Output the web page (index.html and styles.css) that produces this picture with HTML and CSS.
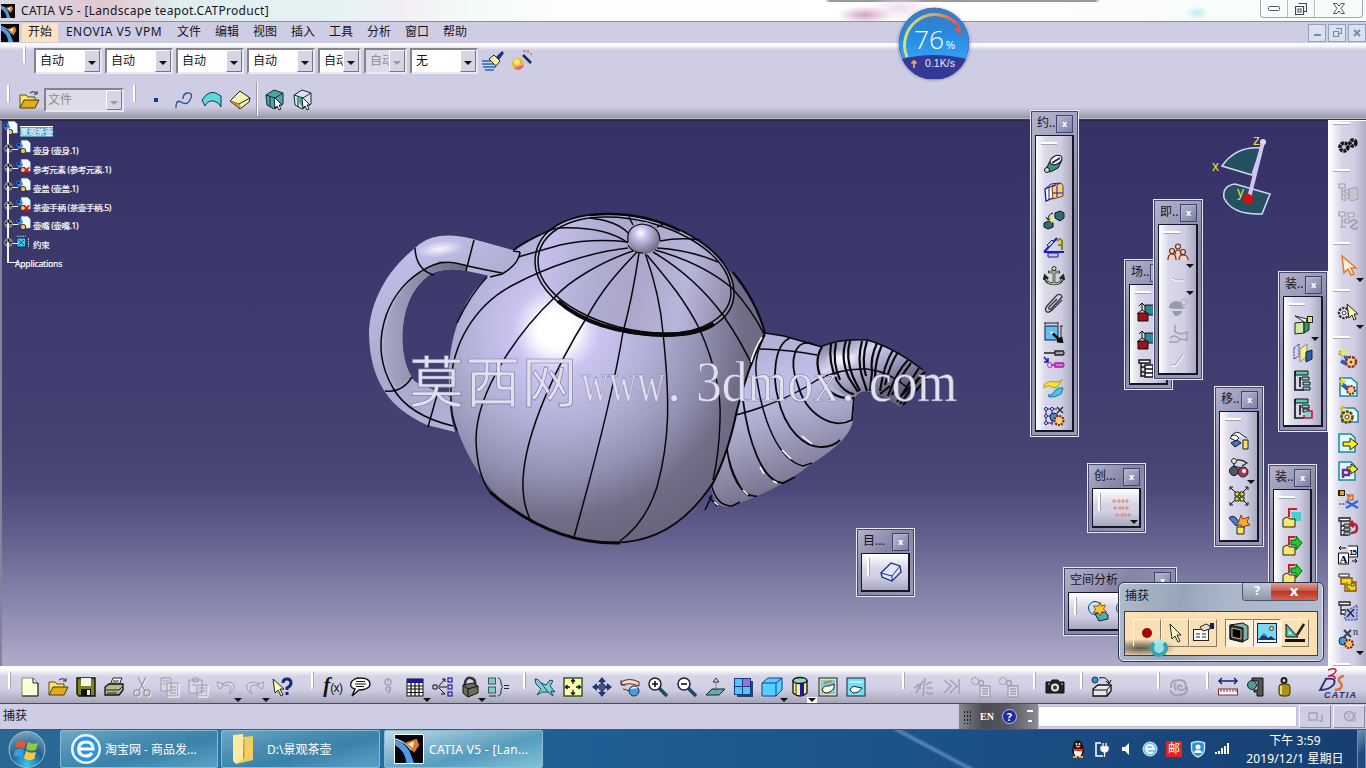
FILE: index.html
```html
<!DOCTYPE html>
<html lang="zh-CN">
<head>
  <meta charset="UTF-8" />
  <title>CATIA V5 - [Landscape teapot.CATProduct]</title>
  <link rel="stylesheet" href="styles.css">
</head>
<body>

  <!-- icon set -->
  <svg class="sprite" width="0" height="0">
    <symbol id="i-app" viewBox="0 0 22 22"><rect width="22" height="22" fill="#07070f"/><path d="M0 4Q6 5 11 12L15 22H9Q8 12 0 8Z" fill="#4f9be0"/><path d="M0 3Q8 5 13 12" fill="none" stroke="#cfe8ff"/><path d="M8 6L17 3 19 8 15 14 11 9Z" fill="#e07a26"/><path d="M10 7L15 5 14 10Z" fill="#fff0c8"/></symbol>
    <symbol id="i-new" viewBox="0 0 22 22"><path d="M3 2H14L19 7V20H3Z" fill="#ffffd8" stroke="#8a8a66"/><path d="M14 2V7H19M19 7V20H3" fill="none" stroke="#222"/></symbol>
    <symbol id="i-open" viewBox="0 0 22 22"><path d="M2 19V6H8L10 8H17V11" fill="#ffe36a" stroke="#5a4a10"/><path d="M2 19L6 11H21L17 19Z" fill="#e3ac1c" stroke="#4a3a08"/><path d="M12 4Q16 1 19 5M19 2V5H16" fill="none" stroke="#222"/></symbol>
    <symbol id="i-save" viewBox="0 0 22 22"><path d="M2 2H20V20H4L2 18Z" fill="#7c8417" stroke="#111" stroke-width="1.4"/><rect x="6" y="2" width="10" height="8" fill="#f4f4ee"/><rect x="6" y="13" width="10" height="7" fill="#111"/><rect x="12" y="14" width="3" height="5" fill="#eee"/></symbol>
    <symbol id="i-print" viewBox="0 0 22 22"><path d="M7 9L10 2H19L16 9" fill="#fff" stroke="#222"/><path d="M2 11L6 8H20V14L16 19H2Z" fill="#b9b78c" stroke="#111" stroke-width="1.3"/><path d="M2 14H16L20 10M10 5h6M9 7h6M4 17h10" stroke="#222" fill="none"/></symbol>
    <symbol id="i-cut" viewBox="0 0 22 22"><g fill="none" stroke="#fff" transform="translate(1 1)"><path d="M7 1L14 15M15 1L8 15"/><circle cx="6" cy="17" r="3"/><circle cx="16" cy="17" r="3"/></g><g fill="none" stroke="#9a9aa8" stroke-width="1.3"><path d="M7 1L14 15M15 1L8 15"/><circle cx="6" cy="17" r="3"/><circle cx="16" cy="17" r="3"/></g></symbol>
    <symbol id="i-copy" viewBox="0 0 22 22"><g fill="#d8d8e6" stroke="#9a9aa8"><path d="M2 2H12V15H2ZM8 7H19V20H8Z"/><path d="M4 5h6M4 8h3M11 11h6M11 14h6M11 17h6"/></g><path d="M20 8V21H9" fill="none" stroke="#fff"/></symbol>
    <symbol id="i-paste" viewBox="0 0 22 22"><g fill="#d8d8e6" stroke="#9a9aa8"><path d="M2 4H15V17H2ZM6 2H11V6H6ZM10 9H20V20H10Z"/><path d="M12 12h6M12 15h6M5 9h4"/></g><path d="M21 10V21H11" fill="none" stroke="#fff"/></symbol>
    <symbol id="i-undo" viewBox="0 0 22 22"><path d="M3 13L1 6 8 8 5.500 9Q13 3 18 9 19 14 13 18 17 11 13 9 9 8 6 11Z" fill="#dcdce8" stroke="#9a9aa8" transform="translate(1 0)"/></symbol>
    <symbol id="i-redo" viewBox="0 0 22 22"><path d="M19 13L21 6 14 8 16.500 9Q9 3 4 9 3 14 9 18 5 11 9 9 13 8 16 11Z" fill="#dcdce8" stroke="#9a9aa8"/></symbol>
    <symbol id="i-what" viewBox="0 0 22 22"><path d="M2 3L4 17 7 14 10 20 12 19 9 13H13Z" fill="#ffffb8" stroke="#222"/><path d="M12 7Q12 3 16 3 20 3 20 7 20 10 16 12V14M16 16V19" fill="none" stroke="#122c6e" stroke-width="3"/></symbol>
    <symbol id="i-talk" viewBox="0 0 22 22"><path d="M11 2C17 2 21 4 21 8 21 13 13 14 10 14L3 20 6 13C2 12 1 10 2 7 3 4 7 2 11 2Z" fill="#fff" stroke="#111" stroke-width="1.4"/><path d="M7 5.500h9M6 8h11M7 10.500h8" stroke="#111"/></symbol>
    <symbol id="i-link" viewBox="0 0 22 22"><g fill="none" stroke="#a5a5b3" stroke-width="1.5"><circle cx="11" cy="6" r="3"/><path d="M13 10Q15 14 11 18M11 3v3"/><circle cx="11" cy="13" r="2"/></g></symbol>
    <symbol id="i-table" viewBox="0 0 22 22"><rect x="3" y="3" width="16" height="17" fill="#fff" stroke="#111"/><rect x="3" y="3" width="16" height="4" fill="#1a1a9c"/><path d="M3 10H19M3 13H19M3 16.500H19M7 7V20M11 7V20M15 7V20" stroke="#111" stroke-width="1.2"/></symbol>
    <symbol id="i-graph" viewBox="0 0 22 22"><g fill="none" stroke="#1f1fa0" stroke-width="1.2"><rect x="16" y="2" width="4" height="4"/><rect x="16" y="9" width="4" height="4"/><rect x="16" y="16" width="4" height="4"/></g><path d="M1 9h4v4h-4zM6 11H15M7 10L13 3M7 12L13 18M10 3h3v3M9 18l4 0" stroke="#111" fill="none"/></symbol>
    <symbol id="i-lock" viewBox="0 0 22 22"><path d="M6 10V7Q7 1 12 2 17 3 16 9" fill="none" stroke="#333" stroke-width="2.500"/><path d="M4 9L14 7 19 10V17L9 21 4 17Z" fill="#6c6c58" stroke="#111"/><path d="M9 13V21M4 9L9 13 19 10" stroke="#111" fill="none"/></symbol>
    <symbol id="i-equiv" viewBox="0 0 22 22"><g fill="#7fcad0" stroke="#3a5a4a"><rect x="1.500" y="2" width="7" height="6"/><rect x="1.500" y="11" width="7" height="6"/></g><path d="M11 2Q14 2 14 7 14 10 16 10.500 14 11 14 15 14 20 11 20M17 9.500H22M17 12.500H22M2 20H9" fill="none" stroke="#222"/></symbol>
    <symbol id="i-fly" viewBox="0 0 22 22"><path d="M1 3Q4 2 7 7L12 9 16 4 19 5 16 10 21 16 17 15 19 20 14 16 8 16 3 19 7 13 2 8Z" fill="#7fcfe0" stroke="#1a4a5a"/><path d="M7 7L14 16" stroke="#1a4a5a"/></symbol>
    <symbol id="i-fit" viewBox="0 0 22 22"><rect x="2" y="2" width="18" height="18" fill="#ffffb0" stroke="#2a5a2a" stroke-width="1.500"/><path d="M11 3.500V8M9 5.500L11 3.500 13 5.500M11 18.500V14M9 16.500L11 18.500 13 16.500M3.500 11H8M5.500 9L3.500 11 5.500 13M18.500 11H14M16.500 9L18.500 11 16.500 13" fill="none" stroke="#111" stroke-width="1.300"/></symbol>
    <symbol id="i-pan" viewBox="0 0 22 22"><path d="M11 3V19M3 11H19" stroke="#26386c" stroke-width="3"/><path d="M11 1L15 6H7ZM11 21L7 16H15ZM1 11L6 7V15ZM21 11L16 7V15Z" fill="#26386c"/><path d="M8 8h6v6h-6z" fill="#3c5488"/></symbol>
    <symbol id="i-rot" viewBox="0 0 22 22"><path d="M2 6Q10 1 20 6L20 10Q10 6 4 9ZM4 13L11 15" fill="#f6dcc8" stroke="#5a2a1a"/><path d="M2 4V9H7" fill="none" stroke="#5a2a1a"/><circle cx="15" cy="15" r="5" fill="#4a9fd8" stroke="#12304c"/><path d="M11 13Q15 9 19 12" fill="#fff"/></symbol>
    <symbol id="i-zin" viewBox="0 0 22 22"><path d="M12 12L20 20" stroke="#1b4a66" stroke-width="3.500"/><circle cx="8" cy="8" r="6" fill="#fff" stroke="#223" stroke-width="1.500"/><path d="M8 5V11M5 8H11" stroke="#111" stroke-width="1.600"/></symbol>
    <symbol id="i-zout" viewBox="0 0 22 22"><path d="M12 12L20 20" stroke="#1b4a66" stroke-width="3.500"/><circle cx="8" cy="8" r="6" fill="#fff" stroke="#223" stroke-width="1.500"/><path d="M5 8H11" stroke="#111" stroke-width="1.600"/></symbol>
    <symbol id="i-normal" viewBox="0 0 22 22"><path d="M2 19L8 13H21L15 19Z" fill="#5fb0a8" stroke="#123"/><path d="M12 15V6" stroke="#a33" stroke-dasharray="1.500 1"/><path d="M9 6L12 2 15 6Z" fill="#ddd" stroke="#333"/></symbol>
    <symbol id="i-multi" viewBox="0 0 22 22"><path d="M5 5H21V21H5Z" fill="#2a4470"/><rect x="2.500" y="2.500" width="16" height="16" fill="#58c6f2" stroke="#143a8a"/><rect x="11" y="3" width="7" height="7" fill="#a070e0"/><path d="M10.500 3V18M3 10.500H18" stroke="#143a8a"/></symbol>
    <symbol id="i-cube" viewBox="0 0 22 22"><path d="M1 7L7 2H21V14L15 20H1Z" fill="#58d0ff" stroke="#1a3a9a"/><path d="M1 7H15V20M15 7L21 2" fill="none" stroke="#1a3a9a"/></symbol>
    <symbol id="i-cyl" viewBox="0 0 22 22"><path d="M4 4V17Q11 23 18 17V4" fill="#f2eea0" stroke="#111" stroke-width="1.300"/><path d="M11 7V20Q15 20 15 18V6Z" fill="#1a1a9a"/><ellipse cx="11" cy="4.500" rx="7" ry="3" fill="#8fd8c0" stroke="#111" stroke-width="1.300"/><path d="M7 7V19" stroke="#333"/></symbol>
    <symbol id="i-hide" viewBox="0 0 22 22"><rect x="2" y="2" width="18" height="18" fill="#cfe6b4" stroke="#223"/><rect x="4" y="4" width="14" height="14" fill="#79cce4"/><path d="M5 14Q7 9 12 10L17 8 17 12Q14 17 8 17Z" fill="#f8f8e8" stroke="#222"/><path d="M7 7L15 5" stroke="#c68a2c" stroke-width="2"/></symbol>
    <symbol id="i-swap" viewBox="0 0 22 22"><rect x="2" y="2" width="18" height="18" fill="#6fe0f6" stroke="#223"/><path d="M5 14Q7 9 12 11L17 12Q14 17 8 17Z" fill="#f8f8f8" stroke="#222"/><path d="M4 6h14" stroke="#b8f2fa" stroke-width="2"/></symbol>
    <symbol id="i-g1" viewBox="0 0 22 22"><path d="M1 12L8 8M3 17L10 5M12 2L10 20M13 9Q17 5 19 7M13 12H20M13 16Q17 19 20 17M4 8l4 5" fill="none" stroke="#a2a2b0" stroke-width="1.600"/></symbol>
    <symbol id="i-g2" viewBox="0 0 22 22"><path d="M3 4L10 10 3 17M9 4L16 10 9 17M18 3V18" fill="none" stroke="#a2a2b0" stroke-width="1.500"/></symbol>
    <symbol id="i-g3" viewBox="0 0 22 22"><g fill="none" stroke="#a0a0ae" stroke-width="1.300"><circle cx="6" cy="5" r="3.500" stroke-dasharray="2 1"/><circle cx="12" cy="7" r="2.500"/><path d="M11 10H21V21H11Z" fill="#dedee8"/><path d="M13 13h6M13 15.500h6M13 18h6"/></g></symbol>
    <symbol id="i-cam" viewBox="0 0 22 22"><path d="M2 6H7L8 4H14L15 6H20V17H2Z" fill="#222" stroke="#111"/><circle cx="11" cy="11.500" r="4" fill="#e2e2da"/><circle cx="11" cy="11.500" r="2" fill="#333"/><path d="M4 8h2M17 8h2" stroke="#ccc"/></symbol>
    <symbol id="i-3dp" viewBox="0 0 22 22"><circle cx="4" cy="4" r="3" fill="#3a90c8" stroke="#134"/><path d="M8 2Q16 0 18 7M15 5L18 8 20 4" fill="none" stroke="#111"/><path d="M2 13L7 9H20V15L16 20H2Z" fill="#e8e8ec" stroke="#111" stroke-width="1.300"/><path d="M2 14H16V20M16 14L20 9" fill="none" stroke="#111"/></symbol>
    <symbol id="i-swirl" viewBox="0 0 22 22"><path d="M3 12Q2 4 10 4 18 3 18 11 17 14 13 14 9 14 10 10 12 8 14 11M19 11Q20 19 11 19 4 20 2 14M8 14Q5 10 8 7" fill="none" stroke="#a2a2b0" stroke-width="2"/></symbol>
    <symbol id="i-ruler" viewBox="0 0 22 22"><path d="M2 5H20M5 2L2 5 5 8M17 2L20 5 17 8" fill="none" stroke="#1a1a7a" stroke-width="1.400"/><rect x="1.500" y="13" width="19" height="6" fill="#fff" stroke="#8a2a3a"/><path d="M4 13v3M7 13v3M10 13v3M13 13v3M16 13v3M19 13v3" stroke="#8a2a3a"/></symbol>
    <symbol id="i-cal" viewBox="0 0 22 22"><path d="M7 2H18V20H12V16H9V14H13V5H7Z" fill="#555" stroke="#111"/><circle cx="7" cy="9" r="4.500" fill="#4c9a94" stroke="#122"/></symbol>
    <symbol id="i-weight" viewBox="0 0 22 22"><circle cx="11" cy="4.500" r="2.500" fill="none" stroke="#222" stroke-width="2"/><rect x="6" y="8" width="11" height="12" rx="3" fill="#a8921c" stroke="#3a3008"/><path d="M8 10v8" stroke="#e8da78" stroke-width="2"/></symbol>

    <symbol id="i-brush" viewBox="0 0 22 22"><path d="M0 11H12M0 14H13M1 17H14M3 20H12" stroke="#2268b8" stroke-width="1.500"/><path d="M7 9L12 5 18 11 14 16Z" fill="#f8f0a8" stroke="#222"/><path d="M14 7L20 1 22 3 17 10Z" fill="#1f2e8a"/></symbol>
    <symbol id="i-wiz" viewBox="0 0 22 22"><circle cx="7" cy="14" r="6" fill="#e8b838"/><circle cx="6" cy="12" r="3" fill="#ffe86a"/><path d="M3 18a6 6 0 0 0 10-3z" fill="#e0609a"/><path d="M12 5L20 13" stroke="#1a2a5a" stroke-width="2.500"/><path d="M12 1h3M17 0v3M19 4h2" stroke="#c0504a"/></symbol>
    <symbol id="i-pt" viewBox="0 0 22 22"><rect x="9" y="9" width="4" height="4" fill="#103c80"/></symbol>
    <symbol id="i-curve" viewBox="0 0 22 22"><path d="M3 19Q3 10 8 13 14 17 17 11 21 3 14 4 10 5 10 10" fill="none" stroke="#26528a" stroke-width="1.300"/></symbol>
    <symbol id="i-surf" viewBox="0 0 22 22"><path d="M1 11Q9 -2 20 7L20 18Q18 13 13 12 7 11 4 17Z" fill="#5cd8de" stroke="#153a44"/></symbol>
    <symbol id="i-box" viewBox="0 0 22 22"><path d="M1 12L11 2 21 9 20 13 11 20Z" fill="#f6f0b2" stroke="#222"/><path d="M1 12L10 15 21 9M10 15L11 20" fill="none" stroke="#222"/><path d="M1 12l10 3 1 5z" fill="#c8962c"/></symbol>
    <symbol id="i-sel1" viewBox="0 0 22 22"><path d="M2 6L10 1 19 4V15L10 20 3 16Z" fill="#4fa4a8" stroke="#142a30"/><path d="M2 6L11 9 19 4M11 9V20M6 8v10" fill="none" stroke="#142a30"/><path d="M10 8L11 19 13 17 15 21 17 20 15 16H18Z" fill="#fff" stroke="#222"/></symbol>
    <symbol id="i-sel2" viewBox="0 0 22 22"><path d="M2 6L10 1 19 4V15L10 20 3 16Z" fill="#d8e6ea" stroke="#142a30"/><path d="M2 6L11 9 19 4M11 9V20M6 8v10" fill="none" stroke="#142a30"/><path d="M4 9h6v9z" fill="#4fa4a8"/><path d="M10 8L11 19 13 17 15 21 17 20 15 16H18Z" fill="#fff" stroke="#222"/></symbol>

    <symbol id="i-coin" viewBox="0 0 22 22"><path d="M3 16L7 8 16 3 19 7 15 15 7 19Z" fill="#3a9090" stroke="#111"/><ellipse cx="13" cy="7" rx="6.500" ry="4" fill="#f4f4f4" stroke="#111" transform="rotate(-30 13 7)"/><path d="M9 10L17 5" stroke="#222" stroke-width="1.500"/><circle cx="4" cy="17" r="2.500" fill="#cde" stroke="#111"/></symbol>
    <symbol id="i-contact" viewBox="0 0 22 22"><path d="M2 8L12 4V16L3 20Z" fill="#fff" stroke="#1c1c8a" stroke-width="1.300"/><path d="M9 6L18 2 20 5V15L10 18Z" fill="#f6cf90" stroke="#7a3a10"/><path d="M2 8L8 3 17 2M14 5V16M6 7V19M10 12H20" fill="none" stroke="#1c1c8a"/></symbol>
    <symbol id="i-offset" viewBox="0 0 22 22"><path d="M12 4L17 2 21 4V9L17 12 12 9ZM1 14L6 12 10 14V18L5 20 1 18Z" fill="#2f6f74" stroke="#111"/><path d="M5 11Q5 5 10 4M3 8L5 11 8 9" fill="none" stroke="#111"/><path d="M7 9L11 7V12L8 14Z" fill="#f2ea60"/></symbol>
    <symbol id="i-angle" viewBox="0 0 22 22"><path d="M1 15H21M1 15L14 1" stroke="#1a1ad0" stroke-width="2"/><path d="M4 8l5-5 2 2-5 5zM5 16h10v4H5z" fill="#bcd" stroke="#1a1a9a"/><path d="M14 4Q17 0 19 4L19 13M15 8H19" fill="none" stroke="#8a8a10" stroke-width="2.200"/></symbol>
    <symbol id="i-anchor" viewBox="0 0 22 22"><path d="M11 3V19M5 7H17M2 12Q3 19 11 19 19 19 20 12M1 15L2 11 5 14M21 15L20 11 17 14" fill="none" stroke="#1c2a1c" stroke-width="2.600"/><circle cx="11" cy="3.500" r="2" fill="#e0e8c8" stroke="#1c2a1c"/><path d="M11 6V19M6 7H16M3 14Q5 19 11 19 17 19 19 14" fill="none" stroke="#e4ead0"/></symbol>
    <symbol id="i-clip" viewBox="0 0 22 22"><path d="M4 19Q1 17 4 13L14 2Q18 0 19 4L8 16Q5 17 6 14L14 6M4 19Q6 20 9 17L19 7" fill="none" stroke="#333" stroke-width="1.300"/></symbol>
    <symbol id="i-quick" viewBox="0 0 22 22"><rect x="2" y="5" width="13" height="14" fill="#62bdf2" stroke="#123"/><path d="M2 2H15M2 1V4M15 1V4M18 5V19M17 5h3M17 19h3" stroke="#222"/><path d="M8 11L18 20M14 20L19 21 18 16" stroke="#111" stroke-width="2.500" fill="none"/><path d="M7 10l4 1-3 3z" fill="#fff"/></symbol>
    <symbol id="i-flex" viewBox="0 0 22 22"><path d="M1 4H12M12 2H20Q22 4 20 6H12Z" fill="#9aa29a" stroke="#222" stroke-width="1.300"/><path d="M8 16H12M12 14H20Q22 16 20 18H12Z" fill="#e070e0" stroke="#a020a0" stroke-width="1.300"/><circle cx="7" cy="16" r="2.500" fill="none" stroke="#c030c0"/><path d="M1 8L5 13M5 9V13H1" fill="none" stroke="#1a1ab0" stroke-width="1.500"/></symbol>
    <symbol id="i-change" viewBox="0 0 22 22"><path d="M1 8Q6 3 11 5 15 6 19 3L15 9Q12 12 9 10 6 7 1 11Z" fill="#f6ea28" stroke="#a89a18"/><path d="M5 18Q9 19 11 15 14 10 20 11L18 17Q12 21 6 20Z" fill="#4cc4e6" stroke="#1a7a9a"/></symbol>
    <symbol id="i-pattern" viewBox="0 0 22 22"><path d="M3 2V20M9 2V20M3 4H14M3 11H14M3 18H10" stroke="#1a1a8a"/><g fill="#fff" stroke="#1a1a8a"><circle cx="3" cy="4" r="1.500"/><circle cx="9" cy="4" r="1.500"/><circle cx="3" cy="11" r="1.500"/><circle cx="3" cy="18" r="1.500"/></g><path d="M14 2L20 8M20 2L14 8" stroke="#333" stroke-width="1.500"/><circle cx="11" cy="12" r="4" fill="#3a8ad8" stroke="#123"/><circle cx="16" cy="15.500" r="4.500" fill="#f4d070" stroke="#7a2010" stroke-dasharray="2 1" stroke-width="2"/></symbol>

    <symbol id="i-scene" viewBox="0 0 22 22"><path d="M5 2V8L0 12M5 8L10 11M2 4L5 1 8 4" fill="none" stroke="#111"/><path d="M8 3H20V13H8Z" fill="#2f8a96" stroke="#111"/><path d="M1 11H11V19H1Z" fill="#9c1414" stroke="#111"/></symbol>
    <symbol id="i-list" viewBox="0 0 22 22"><path d="M2 2H13V5H2ZM4 5V19M4 9H8M4 14H8M4 18H8M8 7h8v4h-8zM8 11h8v4h-8zM8 15h8v4h-8z" fill="#fff" stroke="#111" stroke-width="1.400"/></symbol>
    <symbol id="i-people" viewBox="0 0 22 22"><g fill="#f4d0bc" stroke="#6a3020" stroke-width="1.200"><circle cx="11" cy="4.500" r="2.500"/><path d="M8 13Q8 8 11 8 14 8 14 13"/><circle cx="5" cy="9" r="2.500"/><circle cx="16" cy="10" r="2.500"/><path d="M1 18Q1 12 5 12 9 12 9 18M12 18Q12 13 16 13 21 13 21 18"/></g></symbol>
    <symbol id="i-dash" viewBox="0 0 22 22"><path d="M5 9L10 11H17" stroke="#a8a8b6" fill="none"/><path d="M5 10L10 12H17" stroke="#fff" fill="none"/></symbol>
    <symbol id="i-hat" viewBox="0 0 22 22"><path d="M2 12Q2 6 9 5 15 5 16 11L20 12Q10 14 2 12ZM5 15H15Q14 20 8 20Z" fill="#9a9aa6"/><circle cx="17" cy="6" r="3" fill="none" stroke="#aaaab6"/></symbol>
    <symbol id="i-arm" viewBox="0 0 22 22"><path d="M2 19H10L14 16 20 17V9L14 11M8 2V9L14 11M3 15Q8 10 13 17" fill="none" stroke="#a0a0ae" stroke-width="1.500"/></symbol>
    <symbol id="i-slash" viewBox="0 0 22 22"><path d="M3 15H8L16 4" stroke="#a6a6b4" fill="none"/><path d="M4 16H9L17 5" stroke="#fff" fill="none"/></symbol>
    <symbol id="i-asm" viewBox="0 0 22 22"><path d="M3 9L12 8V19L3 20Z" fill="#cfe8a0" stroke="#222"/><path d="M12 8L17 6V16L12 19Z" fill="#2f9a70" stroke="#222"/><path d="M3 2L15 5 14 9Z" fill="#fff" stroke="#222"/><rect x="15.500" y="2.500" width="5" height="6" fill="#f4e060" stroke="#222"/></symbol>
    <symbol id="i-mirror" viewBox="0 0 22 22"><path d="M2 6L7 2V14L2 17Z" fill="none" stroke="#1a2a8a" stroke-dasharray="2 1"/><path d="M8 7L15 2V14L8 20Z" fill="#f8ee88" stroke="#888"/><path d="M14 10L20 8V17L14 20Z" fill="#2a60b0" stroke="#122"/></symbol>
    <symbol id="i-tree1" viewBox="0 0 22 22"><path d="M3 1H16V5H3Z" fill="#58c8b0" stroke="#111"/><path d="M3 1V20H12M8 7V17" fill="none" stroke="#111" stroke-width="1.600"/><path d="M10 7h7v3h-7zM11 12h7v3h-7zM11 17h7v3h-7z" fill="#7ad8c8" stroke="#111"/></symbol>
    <symbol id="i-tree2" viewBox="0 0 22 22"><path d="M3 1H16V5H3Z" fill="#58c8b0" stroke="#111"/><path d="M3 1V20H12M8 7V17" fill="none" stroke="#111" stroke-width="1.600"/><path d="M10 7h7v3h-7zM11 11h6v3h-6z" fill="#7ad8c8" stroke="#111"/><path d="M14 13h6v7h-8v-3" fill="#7ad8c8" stroke="#d0123c" stroke-width="1.600"/></symbol>
    <symbol id="i-manip" viewBox="0 0 22 22"><path d="M3 7Q9 0 14 6L19 9M2 9Q6 3 11 9L8 12Z" fill="#f8f8f8" stroke="#222"/><path d="M3 14L9 11 13 14 7 18Z" fill="#3a7ad0" stroke="#111"/><path d="M15 11H20V20H15Z" fill="#f4e860" stroke="#222"/></symbol>
    <symbol id="i-snap" viewBox="0 0 22 22"><path d="M6 2V10M9 3Q14 2 19 6L14 9" fill="none" stroke="#222" stroke-width="1.300"/><circle cx="6" cy="4" r="2.500" fill="#eee" stroke="#222"/><circle cx="6" cy="14" r="4.500" fill="#556" stroke="#111"/><path d="M5 9L14 11" stroke="#222"/><circle cx="15" cy="15" r="5" fill="#a03a5a" stroke="#222"/><circle cx="16" cy="14" r="2" fill="#fff"/></symbol>
    <symbol id="i-explode" viewBox="0 0 22 22"><path d="M2 2L7 7M2 5V2H5M20 2L15 7M17 2H20V5M2 20L7 15M2 17V20H5M20 20L15 15M20 17V20H17" fill="none" stroke="#111"/><path d="M7 7h4v4h-4zM12 7h4v4h-4zM7 12h4v4h-4zM12 12h4v4h-4z" fill="#d8da4a" stroke="#222"/></symbol>
    <symbol id="i-clash" viewBox="0 0 22 22"><path d="M1 5Q5 1 9 6L12 11 8 13Z" fill="#4a7ad8" stroke="#222"/><path d="M11 8l2-6 2 4 6-2-2 5 3 3-5 1-2 4-2-5-4 0z" fill="#f8a838" stroke="#8a3a10"/><path d="M9 14H16V21H9Z" fill="#f4e860" stroke="#222"/></symbol>
    <symbol id="i-cp1" viewBox="0 0 22 22"><path d="M8 10V2H16" stroke="#d01c1c" stroke-width="2" fill="none"/><path d="M10 5H20V14H12Z" fill="#46d0c8"/><path d="M2 12L6 10 9 12H14V20H2Z" fill="#f6e86a" stroke="#222"/></symbol>
    <symbol id="i-cp2" viewBox="0 0 22 22"><path d="M8 10V2H14" stroke="#d01c1c" stroke-width="2" fill="none"/><path d="M10 5H15V1L21 8 15 15V10H10Z" fill="#20c828" stroke="#0c5a10"/><path d="M2 12L6 10 9 12H14V20H2Z" fill="#f6e86a" stroke="#222"/></symbol>
    <symbol id="i-dots" viewBox="0 0 22 22"><g stroke="#e08a78" stroke-width="1.200"><path d="M1 4H18M2 11H18M4 18H20"/><path d="M3 2v4M8 2v4M12 2v4M16 2v4M4 9v4M9 9v4M12 9v4M16 9v4M6 16v4M11 16v4M14 16v4M18 16v4"/></g></symbol>
    <symbol id="i-eraser" viewBox="0 0 22 22"><path d="M1 12L11 2 20 5 21 11 12 20 2 16Z" fill="#dfe6ff" stroke="#1a2a8a" stroke-width="1.300"/><path d="M1 12L12 15 20 5M12 15V20" fill="none" stroke="#1a2a8a"/></symbol>
    <symbol id="i-space" viewBox="0 0 22 22"><circle cx="8" cy="8" r="6.500" fill="#bfe4f6" stroke="#123a6a"/><path d="M8 14L18 12 21 15V19L12 21Z" fill="#4ab0b8" stroke="#123"/><path d="M13 2l1.500 4 4-1-2 4 3 3-5 0-1 4-3-4-4 1 2-4-2-3 5 0z" fill="#f8c830" stroke="#b04a10"/></symbol>

    <symbol id="i-gears" viewBox="0 0 22 22"><circle cx="7" cy="12" r="4" fill="#bbb" stroke="#111" stroke-width="3.500" stroke-dasharray="3 .8"/><circle cx="16" cy="8" r="3" fill="#bbb" stroke="#111" stroke-width="3.500" stroke-dasharray="3 .8"/></symbol>
    <symbol id="i-gtree" viewBox="0 0 22 22"><path d="M2 2h6v4h-6zM5 6V18M5 9H9M5 13H9M5 18H10M8 8h4v3h-4zM8 13h4v3h-4z" fill="#dcdce8" stroke="#a0a0ae" stroke-width="1.200"/><path d="M12 7L19 5 21 8V17L14 19 12 17Z" fill="#c4c4d0" stroke="#a0a0ae"/></symbol>
    <symbol id="i-gtree2" viewBox="0 0 22 22"><path d="M2 2h6v4h-6zM11 3h6v4h-6zM5 6V17M5 11H9M8 9h4v4h-4zM3 17h6" fill="#dcdce8" stroke="#a0a0ae" stroke-width="1.200"/><path d="M13 12Q18 8 20 12L14 17Q17 21 21 17" fill="none" stroke="#a0a0ae" stroke-width="2"/></symbol>
    <symbol id="i-arrow" viewBox="0 0 22 22"><path d="M5 1L7 18 11 14 14 20 17 19 14 13H19Z" fill="#fff0dc" stroke="#e07830" stroke-width="1.500"/></symbol>
    <symbol id="i-gearsel" viewBox="0 0 22 22"><circle cx="7" cy="11" r="5" fill="#fff" stroke="#334" stroke-width="2.500" stroke-dasharray="2.500 1"/><circle cx="7" cy="11" r="2" fill="none" stroke="#334"/><path d="M10 2L12 16 15 13 17 18 19 17 17 12H21Z" fill="#ffffb0" stroke="#222"/></symbol>
    <symbol id="i-p1" viewBox="0 0 22 22"><path d="M2 4l9 7M4 13l6 3" stroke="#2a5ad8" stroke-width="4"/><path d="M6 0V10M1 5H11M3 2L9 8M9 2L3 8" stroke="#f0e860" stroke-width="1.500"/><circle cx="14" cy="14" r="5" fill="#f8d8a0" stroke="#8a3a18" stroke-width="2.500" stroke-dasharray="3 1"/><circle cx="14" cy="14" r="1.500" fill="#8a3a18"/></symbol>
    <symbol id="i-p2" viewBox="0 0 22 22"><path d="M3 2H14L20 7V20H3Z" fill="#e8fcfc" stroke="#1a8a9a" stroke-width="1.500"/><path d="M5 8l7 6" stroke="#2a5ac8" stroke-width="4"/><path d="M5 2V9M2 5.500H9" stroke="#e8d820" stroke-width="2"/><circle cx="14" cy="14" r="4" fill="#f8c890" stroke="#6a2a18" stroke-width="2" stroke-dasharray="2 1"/></symbol>
    <symbol id="i-p3" viewBox="0 0 22 22"><path d="M5 4H17L21 8V18H5Z" fill="#e8fcfc" stroke="#1a8a9a" stroke-width="1.500"/><circle cx="10" cy="13" r="5.500" fill="#f2dc78" stroke="#5a4410" stroke-width="2.500" stroke-dasharray="3 1"/><circle cx="10" cy="13" r="2" fill="#fff" stroke="#333"/><path d="M5 1V8M2 4.500H9" stroke="#d8c820" stroke-width="1.500"/></symbol>
    <symbol id="i-p4" viewBox="0 0 22 22"><path d="M2 2H14L18 6V20H2Z" fill="#dffafa" stroke="#1a8a9a" stroke-width="1.500"/><path d="M6 10H13V6L21 12 13 18V14H6Z" fill="#f4f020" stroke="#222"/></symbol>
    <symbol id="i-p5" viewBox="0 0 22 22"><path d="M2 2H14L18 6V20H2Z" fill="#dffafa" stroke="#1a8a9a" stroke-width="1.500"/><path d="M10 7H14V4L21 9 14 14V11H10Z" fill="#f4f020" stroke="#222"/><path d="M6 18V10H12V15H6" fill="none" stroke="#702a9a" stroke-width="2.500"/></symbol>
    <symbol id="i-p6" viewBox="0 0 22 22"><path d="M1 2H8V8H1Z" fill="#222"/><path d="M3 3h4v4h-4z" fill="#e8a020"/><path d="M9 6L14 9M11 7h5v5h-5z" stroke="#a05020" fill="#f0c060"/><path d="M2 16H9" stroke="#222" stroke-dasharray="2 1"/><path d="M9 13L21 20M21 13L9 20" stroke="#2a6ad8" stroke-width="2.500"/></symbol>
    <symbol id="i-p7" viewBox="0 0 22 22"><path d="M2 2H13V5H2ZM4 5V19H11M4 10H11M4 14.500H11" fill="#fff" stroke="#222" stroke-width="1.300"/><path d="M7 8h6v3h-6zM7 12h6v3h-6zM7 16h6v3h-6z" fill="#9ac8a8" stroke="#222"/><path d="M14 8Q20 7 20 12 20 17 14 17M16 5L13 8 17 11" fill="none" stroke="#b02030" stroke-width="2.500"/></symbol>
    <symbol id="i-p9" viewBox="0 0 22 22"><path d="M2 2H12V5H2Z" fill="#fff" stroke="#222"/><path d="M4 6H15V10H19V19H8V12H4Z" fill="#f6d820" stroke="#8a4a10" stroke-width="1.300"/><path d="M10 10V17M10 13h3M10 17h3M14 11h3v3h-3z" stroke="#3a5a20" fill="none"/></symbol>
    <symbol id="i-p10" viewBox="0 0 22 22"><path d="M2 2H13V5H2ZM4 5V14H9M4 10H9" fill="#fff" stroke="#222" stroke-width="1.300"/><path d="M8 12L20 5V20L8 20Z" fill="#aab8ee" stroke="#2a3a8a" stroke-dasharray="2 1"/><path d="M10 9L17 17M17 9L10 17" stroke="#222" stroke-width="1.300"/></symbol>

    <symbol id="i-doc" viewBox="0 0 18 18"><path d="M6 1H13L16 4V14H6Z" fill="#f4fcff" stroke="#9ae0f0" stroke-width=".6"/><path d="M0 5L6 3 8 8 3 11Z" fill="#3a86e0"/><circle cx="8" cy="13" r="3" fill="#e8c860" stroke="#241a14"/><circle cx="3" cy="6" r="1.500" fill="#0a1a5a"/></symbol>
    <symbol id="i-docr" viewBox="0 0 18 18"><use href="#i-doc"/><path d="M9 10L15 16M15 10L9 16" stroke="#e01818" stroke-width="2"/></symbol>
    <symbol id="i-cst" viewBox="0 0 18 18"><rect x="1" y="4" width="10" height="10" fill="#4ac8e8" stroke="#0a2a4a"/><path d="M3 6l6 6M9 6l-6 6" stroke="#0a3a6a"/><path d="M1 2H11M14 4V14" stroke="#e8e8f8" stroke-dasharray="2 1"/></symbol>
  </svg>

  <header class="titlebar">
    <svg class="app-icon"><use href="#i-app"/></svg>
    <span class="title">CATIA V5 - [Landscape teapot.CATProduct]</span>
    <div class="win-buttons">
      <span><svg width="12" height="6"><rect x=".5" y=".5" width="11" height="4" rx="1" fill="#fff" stroke="#556"/></svg></span>
      <span><svg width="12" height="12"><path d="M3.500.5H11.500V8.500H9M.5 3.500H8.500V11.500H.5Z" fill="#fff" stroke="#445" stroke-width="1.200"/><rect x="3" y="6" width="3" height="3" fill="none" stroke="#445"/></svg></span>
      <span><svg width="12" height="11"><path d="M.5.5H4L6 3 8 .5H11.500L8 5.500 11.500 10.500H8L6 8 4 10.500H.5L4 5.500Z" fill="#fff" stroke="#556"/></svg></span>
    </div>
  </header>

  <nav class="menubar">
    <svg class="menu-icon"><use href="#i-app"/></svg>
    <a class="active">开始</a><a class="enovia">ENOVIA V5 VPM</a><a>文件</a><a>编辑</a><a>视图</a><a>插入</a><a>工具</a><a>分析</a><a>窗口</a><a>帮助</a>
    <div class="mdi-buttons">
      <span><svg width="7" height="9"><path d="M0 7H7" stroke="#7c8ca4" stroke-width="2"/></svg></span>
      <span><svg width="9" height="9"><path d="M3 0.500H8.500V5.500H6M.5 3.500H5.500V8.500H.5Z" fill="none" stroke="#7c8ca4" stroke-width="1.200"/></svg></span>
      <span><svg width="8" height="8"><path d="M1 1L7 7M7 1L1 7" stroke="#7c8ca4" stroke-width="2"/></svg></span>
    </div>
  </nav>

  <section class="toolbars">
    <div class="row row-props">
      <i class="grip"></i>
      <div class="combo">自动<b></b></div>
      <div class="combo">自动<b></b></div>
      <div class="combo">自动<b></b></div>
      <div class="combo">自动<b></b></div>
      <div class="combo narrow">自动<b></b></div>
      <div class="combo narrow off">自动<b></b></div>
      <div class="combo">无<b></b></div>
      <svg class="ico brush"><use href="#i-brush"/></svg>
      <svg class="ico wiz"><use href="#i-wiz"/></svg>
    </div>
    <div class="row row-select">
      <i class="grip"></i>
      <svg class="ico folder"><use href="#i-open"/></svg>
      <div class="combo files off">文件<b></b></div>
      <i class="grip second"></i>
      <span class="tool"><svg class="ico"><use href="#i-pt"/></svg></span>
      <span class="tool"><svg class="ico"><use href="#i-curve"/></svg></span>
      <span class="tool"><svg class="ico"><use href="#i-surf"/></svg></span>
      <span class="tool"><svg class="ico"><use href="#i-box"/></svg></span>
      <i class="divider"></i>
      <span class="tool"><svg class="ico"><use href="#i-sel1"/></svg></span>
      <span class="tool"><svg class="ico"><use href="#i-sel2"/></svg></span>
    </div>
  </section>

  <main class="work">
    <div class="view3d">
      <ul class="tree">
        <li class="root"><svg><use href="#i-doc"/></svg><span>景观茶壶</span></li>
        <li><em></em><svg><use href="#i-doc"/></svg><span>壶身 (壶身.1)</span></li>
        <li><em></em><svg><use href="#i-docr"/></svg><span>参考元素 (参考元素.1)</span></li>
        <li><em></em><svg><use href="#i-doc"/></svg><span>壶盖 (壶盖.1)</span></li>
        <li><em></em><svg><use href="#i-docr"/></svg><span>茶壶手柄 (茶壶手柄.5)</span></li>
        <li><em></em><svg><use href="#i-doc"/></svg><span>壶嘴 (壶嘴.1)</span></li>
        <li><em></em><svg><use href="#i-cst"/></svg><span>约束</span></li>
        <li class="leaf"><span>Applications</span></li>
      </ul>

      <svg class="teapot" viewBox="360 200 610 350">
        <defs>
          <radialGradient id="gBody" gradientUnits="userSpaceOnUse" cx="556" cy="330" r="228">
            <stop offset="0" stop-color="#fff"/><stop offset=".08" stop-color="#fdfdff"/><stop offset=".19" stop-color="#c9c5f0"/><stop offset=".42" stop-color="#b2afd6"/><stop offset=".64" stop-color="#9391b2"/><stop offset=".82" stop-color="#706d87"/><stop offset="1" stop-color="#67647c"/>
          </radialGradient>
          <linearGradient id="gLid" gradientUnits="userSpaceOnUse" x1="540" y1="250" x2="735" y2="290">
            <stop offset="0" stop-color="#c6c2ee"/><stop offset=".3" stop-color="#b0add2"/><stop offset=".5" stop-color="#aaa7ca"/><stop offset=".75" stop-color="#b9b6dc"/><stop offset="1" stop-color="#8e8ba8"/>
          </linearGradient>
          <linearGradient id="gHandle" gradientUnits="userSpaceOnUse" x1="372" y1="270" x2="470" y2="430">
            <stop offset="0" stop-color="#c2bfe8"/><stop offset=".5" stop-color="#aaa8cc"/><stop offset="1" stop-color="#b4b1d8"/>
          </linearGradient>
          <linearGradient id="gInner" x1="0" y1="0" x2="1" y2="0"><stop offset="0" stop-color="#a9a7c8"/><stop offset="1" stop-color="#6a687c"/></linearGradient>
          <linearGradient id="gSpout" gradientUnits="userSpaceOnUse" x1="770" y1="345" x2="810" y2="480">
            <stop offset="0" stop-color="#b4b1d8"/><stop offset=".3" stop-color="#c2bfea"/><stop offset=".6" stop-color="#a5a3c4"/><stop offset="1" stop-color="#77758e"/>
          </linearGradient>
          <linearGradient id="gTube" gradientUnits="userSpaceOnUse" x1="840" y1="340" x2="870" y2="400">
            <stop offset="0" stop-color="#8d8ba6"/><stop offset=".3" stop-color="#d6d4ee"/><stop offset=".6" stop-color="#a5a3c4"/><stop offset="1" stop-color="#66647a"/>
          </linearGradient>
          <radialGradient id="gKnob" cx=".4" cy=".35" r=".65"><stop offset="0" stop-color="#fff"/><stop offset=".3" stop-color="#c8c5ee"/><stop offset="1" stop-color="#706d88"/></radialGradient>
          <radialGradient id="gShine"><stop offset="0" stop-color="#fff"/><stop offset="1" stop-color="#fff" stop-opacity="0"/></radialGradient>
        </defs>
        <!-- body -->
        <path d="M449 385C447 345 460 300 487 277C500 258 530 238 560 227C590 213 625 211 650 219C700 232 745 275 765 333C752 358 742 390 737 410C730 440 722 462 712 483C700 512 670 532 640 540C610 547 560 537 527 520C490 500 450 440 449 385Z" fill="url(#gBody)"/>
        <!-- handle -->
        <path d="M520 252L473 239Q455 234 440 236Q425 238 415 248C385 272 369 305 369 335Q370 370 385 392Q398 412 427 425L455 432Q449 415 450 397L427 387Q416 384 412 378C398 355 400 315 413 293Q422 278 435 272Q450 267 467 271L495 277Q510 270 520 252Z" fill="url(#gHandle)"/>
        <path d="M440 261Q405 278 393 305 372 350 397 388L412 377C398 355 400 315 413 293Q422 278 435 272 450 267 467 271L467 266Q450 262 440 261Z" fill="url(#gInner)"/>
        <ellipse cx="440" cy="249" rx="24" ry="8" fill="url(#gShine)" opacity=".85" transform="rotate(-8 440 249)"/>
        <!-- spout -->
        <path d="M765 333L783 336 820 347 855 397 853 420C850 440 825 455 807 467 780 488 750 500 727 507Q715 508 711 488C725 462 737 412 737 410 742 385 752 358 765 333Z" fill="url(#gSpout)"/>
        <path d="M820 347Q840 338 867 340 893 347 923 370L927 380 900 407Q887 397 870 392 860 389 855 398 825 390 817 360Z" fill="url(#gTube)"/>
        <ellipse cx="842" cy="359" rx="18" ry="9" fill="url(#gShine)"/>
        <!-- lid -->
        <path d="M536 262C536 232 565 215 605 215C665 214 733 250 733 293C733 318 705 336 665 335C600 335 536 300 536 262Z" fill="url(#gLid)"/>
        <ellipse cx="556" cy="330" rx="33" ry="30" fill="url(#gShine)"/>
        <g fill="none" stroke="#08080c" stroke-width="1.500">
          <path d="M538 262C538 234 567 217 605 217C663 216 731 251 731 292C731 316 703 334 665 333C602 333 538 298 538 262Z"/>
          <path d="M535 262C535 231 565 214 605 214C667 213 734 249 734 293C734 319 706 337 665 336C599 336 535 301 535 262Z"/>
          <path d="M558 301C585 325 625 334 665 335 690 334 705 330 714 324" stroke-width="4"/>
          <path d="M590 215Q640 210 680 231" stroke-width="2.500"/>
          <!-- meridians -->
          <path d="M628 242Q593 238 560 245L518 257"/>
          <path d="M628 248C590 252 547 267 513 285C475 305 450 345 451 390Q450 415 457 431"/>
          <path d="M633 251C600 262 568 282 555 297C520 330 476 390 476 440Q477 475 490 492"/>
          <path d="M637 252C615 275 602 290 587 317C560 360 525 430 523 480Q522 505 532 523"/>
          <path d="M639 253Q632 300 623 332C612 400 590 480 574 537"/>
          <path d="M645 253Q660 295 663 333C670 400 670 440 657 487Q646 522 620 541"/>
          <path d="M647 255C668 280 685 300 700 330Q722 380 720 420 719 455 713 480"/>
          <path d="M653 252Q695 277 723 315 742 343 752 365"/>
          <path d="M655 250Q702 263 732 288 752 310 764 334"/>
          <path d="M657 248Q690 250 718 262M660 241Q680 237 700 240M657 227L664 224"/>
          <path d="M628 243Q605 226 557 228M628 233Q617 221 590 218M633 225L629 217"/>
          <!-- silhouette -->
          <path d="M457 323Q470 295 487 277M513 250Q530 238 556 228"/>
          <path d="M490 492Q552 545 620 543" stroke-width="3"/>
          <path d="M600 542Q670 549 712 484" stroke-width="1.800"/>
          <path d="M733 272Q756 300 765 333C752 358 742 390 737 410Q728 455 711 487" stroke-width="2"/>
          <!-- handle edges -->
          <path d="M502 273Q475 268 460 264 440 258 420 272C385 295 368 345 393 388Q408 415 453 426"/>
          <path d="M474 240L466 271M415 248Q416 270 434 275M385 391Q402 393 412 377M437 395L428 427M520 252Q519 264 502 274L490 277M513 251L520 252"/>
          <!-- spout ribs -->
          <path d="M765 335C754 355 755 370 757 380C763 420 778 460 803 466L812 463"/>
          <path d="M790 338C773 345 773 380 778 398C785 430 805 448 822 447Q833 447 840 440" stroke-width="1.800"/>
          <path d="M813 344C795 338 788 360 798 385C806 415 833 430 852 420L854 397" stroke-width="1.800"/>
          <path d="M743 400C748 440 762 482 783 483L795 477" stroke-width="1.800"/>
          <path d="M727 447C729 475 742 498 757 496M727 450C732 478 744 495 750 496M712 487Q717 506 732 506L740 502M712 495L705 510M709 497L717 506"/>
          <path d="M760 349Q790 350 817 355M765 333L784 336 822 347"/>
          <path d="M736 415Q785 402 817 380Q840 368 867 369 890 372 908 388"/>
          <g stroke-width="2.200">
            <path d="M822 347Q812 362 824 385 835 400 854 398M831 344Q828 362 837 381 845 393 854 394M836 343Q832 362 840 380"/>
            <path d="M846 341Q840 358 849 378L858 392M850 341Q845 357 853 377L860 391"/>
            <path d="M862 341Q857 360 862 376L867 391M867 341Q861 360 866 376"/>
            <path d="M877 343Q870 358 872 372L870 391M882 345Q875 360 875 378"/>
            <path d="M893 350Q884 364 880 391M898 352Q890 364 885 385M890 386L880 394"/>
            <path d="M908 360Q896 372 888 396M911 363Q900 377 892 395"/>
            <path d="M919 368L897 402M923 373L900 404M927 378L903 405M898 399L925 372"/>
          </g>
          <path d="M820 347Q840 338 867 340 893 347 923 370"/>
        </g>
        <g stroke="#fff" stroke-width="1.500" fill="none"><path d="M802 436L812 444M782 450L791 459M760 467L764 474M743 490L748 495M773 481L777 483M714 502L718 505M762 337Q754 350 751 362"/></g>
        <circle cx="644" cy="238" r="16" fill="url(#gKnob)"/>
        <path d="M628 242Q626 226 642 224 660 226 660 241M628 245Q632 253 643 253" fill="none" stroke="#08080c" stroke-width="1.200"/>
        <!-- site mark -->
        <g class="mark">
          <text x="409" y="402" class="mark-cjk" textLength="168">莫西网</text>
          <text x="581" y="401" textLength="84" lengthAdjust="spacingAndGlyphs">www</text>
          <text x="667" y="401">.</text>
          <text x="696" y="401" textLength="143" lengthAdjust="spacingAndGlyphs">3dmox</text>
          <text x="841" y="401">.</text>
          <text x="869" y="401" textLength="88" lengthAdjust="spacingAndGlyphs">com</text>
        </g>
      </svg>

      <svg class="compass" viewBox="1205 130 75 90">
        <g fill="#24505f" stroke="#cfd6f4" stroke-width="1.600">
          <path d="M1222 166Q1236 146 1261 148L1252 175Z"/>
          <path d="M1270 194L1262 214Q1232 215 1224 198 1222 186 1235 184Z"/>
        </g>
        <path d="M1263 142L1249 198" stroke="#d6c4f4" stroke-width="4"/>
        <circle cx="1263" cy="142" r="3" fill="#e4d4f8"/><circle cx="1248" cy="199" r="5" fill="#dc0c0c"/>
        <text x="1253" y="145">z</text><text x="1212" y="171">x</text><text x="1237" y="197">y</text>
      </svg>
    </div>

    <aside class="dock">
      <div class="set s1"><i></i><span><svg class="ico"><use href="#i-gears"/></svg></span></div>
      <div class="set s2"><i></i><span><svg class="ico"><use href="#i-gtree"/></svg></span><span><svg class="ico"><use href="#i-gtree2"/></svg></span></div>
      <div class="set s3"><i></i><span class="more"><svg class="ico"><use href="#i-arrow"/></svg></span></div>
      <div class="set s4"><i></i><span class="more"><svg class="ico"><use href="#i-gearsel"/></svg></span></div>
      <div class="set s5"><i></i>
        <span><svg class="ico"><use href="#i-p1"/></svg></span>
        <span><svg class="ico"><use href="#i-p2"/></svg></span>
        <span><svg class="ico"><use href="#i-p3"/></svg></span>
        <span><svg class="ico"><use href="#i-p4"/></svg></span>
        <span><svg class="ico"><use href="#i-p5"/></svg></span>
        <span><svg class="ico"><use href="#i-p6"/></svg></span>
        <span><svg class="ico"><use href="#i-p7"/></svg></span>
        <span><svg class="ico" viewBox="0 0 22 22"><path d="M11 2H20.500V13H12M1.500 9H11.500V20H1.500Z" fill="#fff" stroke="#111"/><text x="2.500" y="18.500" font-family="Liberation Serif" font-weight="bold" font-size="11">A</text><text x="12" y="10.500" font-family="Liberation Sans" font-weight="bold" font-size="8" textLength="8">15</text><path d="M2 4H9M15 17H20M4 2L2 4 4 6M18 15L20 17 18 19" stroke="#111" fill="none"/></svg></span>
        <span><svg class="ico"><use href="#i-p9"/></svg></span>
        <span><svg class="ico"><use href="#i-p10"/></svg></span>
        <span class="more"><svg class="ico" viewBox="0 0 22 22"><path d="M7 2L14 9M14 2L7 9" stroke="#444" stroke-width="2.200"/><circle cx="6" cy="13" r="4" fill="#4a9ae0" stroke="#123"/><circle cx="12" cy="16" r="4" fill="#f4c060" stroke="#7a2a10" stroke-width="2" stroke-dasharray="2 1"/><text x="16" y="7" font-family="Liberation Serif" font-size="10" fill="#222">n</text></svg></span>
      </div>
      <div class="set s6"><i></i></div>
    </aside>
  </main>

  <section class="bottombar">
    <div class="group g-std"><i class="grip"></i>
      <span class="tool"><svg class="ico"><use href="#i-new"/></svg></span>
      <span class="tool"><svg class="ico"><use href="#i-open"/></svg></span>
      <span class="tool"><svg class="ico"><use href="#i-save"/></svg></span>
      <span class="tool"><svg class="ico"><use href="#i-print"/></svg></span>
      <span class="tool"><svg class="ico"><use href="#i-cut"/></svg></span>
      <span class="tool"><svg class="ico"><use href="#i-copy"/></svg></span>
      <span class="tool"><svg class="ico"><use href="#i-paste"/></svg></span>
      <span class="tool more"><svg class="ico"><use href="#i-undo"/></svg></span>
      <span class="tool more"><svg class="ico"><use href="#i-redo"/></svg></span>
      <span class="tool"><svg class="ico"><use href="#i-what"/></svg></span>
    </div>
    <div class="group g-know"><i class="grip"></i>
      <span class="tool fx"><i>f</i><small>(x)</small></span>
      <span class="tool"><svg class="ico"><use href="#i-talk"/></svg></span>
      <span class="tool"><svg class="ico"><use href="#i-link"/></svg></span>
      <span class="tool more"><svg class="ico"><use href="#i-table"/></svg></span>
      <span class="tool"><svg class="ico"><use href="#i-graph"/></svg></span>
      <span class="tool more"><svg class="ico"><use href="#i-lock"/></svg></span>
      <span class="tool"><svg class="ico"><use href="#i-equiv"/></svg></span>
    </div>
    <div class="group g-view"><i class="grip"></i>
      <span class="tool"><svg class="ico"><use href="#i-fly"/></svg></span>
      <span class="tool"><svg class="ico"><use href="#i-fit"/></svg></span>
      <span class="tool"><svg class="ico"><use href="#i-pan"/></svg></span>
      <span class="tool"><svg class="ico"><use href="#i-rot"/></svg></span>
      <span class="tool"><svg class="ico"><use href="#i-zin"/></svg></span>
      <span class="tool"><svg class="ico"><use href="#i-zout"/></svg></span>
      <span class="tool"><svg class="ico"><use href="#i-normal"/></svg></span>
      <span class="tool"><svg class="ico"><use href="#i-multi"/></svg></span>
      <span class="tool more"><svg class="ico"><use href="#i-cube"/></svg></span>
      <span class="tool more lit"><svg class="ico"><use href="#i-cyl"/></svg></span>
      <span class="tool"><svg class="ico"><use href="#i-hide"/></svg></span>
      <span class="tool"><svg class="ico"><use href="#i-swap"/></svg></span>
    </div>
    <div class="group g-cat"><i class="grip"></i>
      <span class="tool"><svg class="ico"><use href="#i-g1"/></svg></span>
      <span class="tool"><svg class="ico"><use href="#i-g2"/></svg></span>
      <span class="tool"><svg class="ico"><use href="#i-g3"/></svg></span>
      <span class="tool"><svg class="ico"><use href="#i-g3"/></svg></span>
    </div>
    <div class="group g-cam"><i class="grip"></i><span class="tool"><svg class="ico"><use href="#i-cam"/></svg></span></div>
    <div class="group g-3dp"><i class="grip"></i><span class="tool"><svg class="ico"><use href="#i-3dp"/></svg></span></div>
    <div class="group g-upd"><i class="grip"></i><span class="tool"><svg class="ico"><use href="#i-swirl"/></svg></span></div>
    <div class="group g-meas"><i class="grip"></i>
      <span class="tool"><svg class="ico"><use href="#i-ruler"/></svg></span>
      <span class="tool"><svg class="ico"><use href="#i-cal"/></svg></span>
      <span class="tool"><svg class="ico"><use href="#i-weight"/></svg></span>
    </div>
    <svg class="ds-logo" viewBox="0 0 44 32">
      <path d="M12 2Q20 -1 20 3 18 7 12 8 20 7 19 11" fill="none" stroke="#c81c3c" stroke-width="1.500"/>
      <path d="M9 11Q21 9 18 16 14 22 4 22L10 11" fill="none" stroke="#2a2f7a" stroke-width="1.800"/>
      <path d="M28 8Q22 9 23 13 28 17 24 21L19 22" fill="none" stroke="#d8762c" stroke-width="2.500"/>
      <text x="8" y="30" font-family="Liberation Sans" font-weight="bold" font-style="italic" font-size="9" fill="#2a2f7a" textLength="32">CATIA</text>
    </svg>
  </section>

  <footer class="statusbar">
    <span class="prompt">捕获</span>
    <div class="langbar"><i></i><span>EN</span><b>?</b><u></u></div>
    <div class="cmdline"></div>
    <div class="sbtn"><svg width="16" height="12"><path d="M2 2H10V9H2ZM12 10H15V3" fill="none" stroke="#a0a0ae" stroke-width="1.300"/></svg></div>
    <div class="sbtn"><svg width="16" height="13"><circle cx="8" cy="6" r="4.500" fill="none" stroke="#a0a0ae" stroke-width="1.500"/><path d="M6 4h4M6 7h4M14 2V11H10" fill="none" stroke="#a0a0ae"/></svg></div>
  </footer>

  <div class="taskbar">
    <div class="start">
      <svg width="40" height="40">
        <defs><radialGradient id="gOrb" cx=".5" cy=".9" r=".9"><stop offset="0" stop-color="#3fc4ec"/><stop offset=".5" stop-color="#1f5f94"/><stop offset="1" stop-color="#7fa4bc"/></radialGradient></defs>
        <circle cx="20" cy="19.500" r="18" fill="url(#gOrb)" stroke="#9cc0d4"/>
        <path d="M10 12Q14 9 19 12L17 19Q12 16 8 18Z" fill="#e8562c"/><path d="M21 12Q25 15 31 13L29 20Q23 22 19 19Z" fill="#94c83c"/>
        <path d="M8 20Q13 17 17 20L15 28Q11 25 6 27Z" fill="#3c9ae0"/><path d="M19 21Q23 24 29 22L27 29Q21 32 17 28Z" fill="#f8cc34"/>
      </svg>
    </div>
    <div class="task">
      <svg width="32" height="32"><circle cx="16" cy="16" r="15" fill="#e8f6ff"/><circle cx="16" cy="16" r="12.500" fill="#2e94e4"/><path d="M8 16H23Q23 9 16 9 9 9 8.500 16 9 23 16 23 20 23 22 20" fill="none" stroke="#fff" stroke-width="3.200"/></svg>
      <span>淘宝网 - 商品发...</span>
    </div>
    <div class="task">
      <svg class="fold" width="24" height="32"><path d="M1 2L11 1V27L4 31 1 28Z" fill="#fbe9a4"/><path d="M11 4L21 3V27L4 31 12 25Z" fill="#f0cf62"/><path d="M12 6V25" stroke="#c89c34"/></svg>
      <span>D:\景观茶壶</span>
    </div>
    <div class="task on">
      <svg class="cat" width="30" height="30"><rect width="30" height="30" fill="#fff"/><svg x="1" y="1" width="28" height="28"><use href="#i-app"/></svg></svg>
      <span>CATIA V5 - [Lan...</span>
    </div>
    <div class="tray">
      <svg width="16" height="18"><ellipse cx="8" cy="10" rx="6" ry="7" fill="#111"/><ellipse cx="8" cy="12" rx="4" ry="4.500" fill="#fff"/><circle cx="8" cy="5" r="4.500" fill="#111"/><path d="M3 8Q8 11 13 8V11Q8 12 3 10Z" fill="#e02020"/><ellipse cx="8" cy="6.500" rx="2.500" ry="1" fill="#f4a820"/><circle cx="6.500" cy="4" r="1" fill="#fff"/><circle cx="9.500" cy="4" r="1" fill="#fff"/><path d="M3 17h4M9 17h4" stroke="#f4a820" stroke-width="2"/></svg>
      <svg width="16" height="18"><path d="M7 3H2V16H9" fill="none" stroke="#fff" stroke-width="1.500"/><path d="M7 7H14V10Q13 12 11 12 8 12 7 10ZM9 3V7M12 3V7M10.500 12V17" fill="#fff" stroke="#fff" stroke-width="1.300"/></svg>
      <svg width="16" height="18"><path d="M4 7H7L11 3V15L7 11H4Z" fill="#fff"/></svg>
      <svg width="16" height="18"><circle cx="8" cy="9" r="7" fill="#6fc0f4" stroke="#d4ecff"/><path d="M4 9H12Q11 5 8 5 4 5 4 9 5 13 8 13 10 13 11 12" fill="none" stroke="#fff" stroke-width="1.800"/></svg>
      <span class="mail">邮</span>
      <svg width="16" height="18"><path d="M1.500 3Q8 0 14.500 3V9Q14 15 8 17 2 15 1.500 9Z" fill="#2f8fd8" stroke="#cfe8ff" stroke-width="1.400"/><circle cx="8" cy="7" r="2.500" fill="#fff"/><path d="M4 13Q4 10 8 10 12 10 12 13Z" fill="#fff"/></svg>
      <svg width="16" height="18"><path d="M2 12v2M5 11v3M8 8v6M11 6v8M14 3v11" stroke="#fff" stroke-width="2"/></svg>
    </div>
    <div class="clock">下午 3:59<br>2019/12/1 星期日</div>
    <div class="peek"></div>
  </div>

  <!-- floating toolbars -->
  <div class="palette constraints">
    <header>约..<b>x</b></header>
    <div class="body">
      <i></i>
      <span><svg class="ico"><use href="#i-coin"/></svg></span>
      <span><svg class="ico"><use href="#i-contact"/></svg></span>
      <span><svg class="ico"><use href="#i-offset"/></svg></span>
      <span><svg class="ico"><use href="#i-angle"/></svg></span>
      <span><svg class="ico"><use href="#i-anchor"/></svg></span>
      <span><svg class="ico"><use href="#i-clip"/></svg></span>
      <span><svg class="ico"><use href="#i-quick"/></svg></span>
      <span><svg class="ico"><use href="#i-flex"/></svg></span>
      <span><svg class="ico"><use href="#i-change"/></svg></span>
      <span><svg class="ico"><use href="#i-pattern"/></svg></span>
    </div>
  </div>
  <div class="palette scenes">
    <header>场..<b></b></header>
    <div class="body">
      <i></i>
      <span><svg class="ico"><use href="#i-scene"/></svg></span>
      <span><svg class="ico"><use href="#i-scene"/></svg></span>
      <span><svg class="ico"><use href="#i-list"/></svg></span>
    </div>
  </div>
  <div class="palette instant">
    <header>即..<b>x</b></header>
    <div class="body">
      <i></i>
      <span class="more"><svg class="ico"><use href="#i-people"/></svg></span>
      <span class="more"><svg class="ico"><use href="#i-dash"/></svg></span>
      <span><svg class="ico"><use href="#i-hat"/></svg></span>
      <span><svg class="ico"><use href="#i-arm"/></svg></span>
      <span><svg class="ico"><use href="#i-slash"/></svg></span>
    </div>
  </div>
  <div class="palette asmfeat">
    <header>装..<b>x</b></header>
    <div class="body">
      <i></i>
      <span class="more"><svg class="ico"><use href="#i-asm"/></svg></span>
      <span><svg class="ico"><use href="#i-mirror"/></svg></span>
      <span><svg class="ico"><use href="#i-tree1"/></svg></span>
      <span><svg class="ico"><use href="#i-tree2"/></svg></span>
    </div>
  </div>
  <div class="palette move">
    <header>移..<b>x</b></header>
    <div class="body">
      <i></i>
      <span><svg class="ico"><use href="#i-manip"/></svg></span>
      <span class="more"><svg class="ico"><use href="#i-snap"/></svg></span>
      <span><svg class="ico"><use href="#i-explode"/></svg></span>
      <span><svg class="ico"><use href="#i-clash"/></svg></span>
    </div>
  </div>
  <div class="palette asmtools">
    <header>装..<b>x</b></header>
    <div class="body">
      <i></i>
      <span><svg class="ico"><use href="#i-cp1"/></svg></span>
      <span><svg class="ico"><use href="#i-cp2"/></svg></span>
      <span><svg class="ico"><use href="#i-cp2"/></svg></span>
    </div>
  </div>
  <div class="palette wide create">
    <header>创...<b>x</b></header>
    <div class="body"><i></i><span class="more"><svg class="ico"><use href="#i-dots"/></svg></span></div>
  </div>
  <div class="palette wide catalog">
    <header>目...<b>x</b></header>
    <div class="body"><i></i><span><svg class="ico"><use href="#i-eraser"/></svg></span></div>
  </div>
  <div class="palette wide analysis">
    <header>空间分析<b>x</b></header>
    <div class="body"><i></i><span><svg class="ico"><use href="#i-space"/></svg></span><span><svg class="ico"><use href="#i-space"/></svg></span></div>
  </div>

  <div class="dialog">
    <header><span>捕获</span><div class="ctl"><b>?</b><b class="close">x</b></div></header>
    <div class="panel">
      <span class="btn in"><svg width="20" height="20"><circle cx="10" cy="10" r="5" fill="#a00808"/></svg></span>
      <span class="btn"><svg width="20" height="22"><path d="M5 2L7 17 10 14 13 20 15 19 12 13H16Z" fill="#ffffc0" stroke="#222"/></svg></span>
      <span class="btn"><svg width="22" height="20"><rect x="1.500" y="6.500" width="15" height="11" fill="#fff" stroke="#222"/><path d="M4 11h4M4 14h4M10 14h4M10 11h4" stroke="#222"/><path d="M8 4L14 1 18 3V6L11 8Z" fill="#f0d8b8" stroke="#222"/><path d="M18 0h4v6h-4z" fill="#1c1c5a"/></svg></span>
      <span class="btn in gap"><svg width="22" height="22"><path d="M2 3L15 1 20 4V17L14 20 2 17Z" fill="#7fb0a8" stroke="#111"/><path d="M2 3L15 6V20L2 17Z" fill="#333" stroke="#111"/><path d="M4 6L13 8V17L4 15Z" fill="#000" stroke="#c8b890"/></svg></span>
      <span class="btn in"><svg width="20" height="20"><rect x=".5" y=".5" width="19" height="19" fill="#78d8f8" stroke="#124"/><path d="M1 17L7 10 11 15 14 13 19 17V17H1Z" fill="#1a3a6a"/><path d="M1 17h18v2h-18z" fill="#e8f8ff"/><path d="M6 12l1-1 1 2z" fill="#fff"/><circle cx="14.500" cy="5.500" r="2" fill="#f6f070" stroke="#333"/></svg></span>
      <span class="btn"><svg width="22" height="20"><path d="M2 1V14H14Z" fill="#48b8b8" stroke="#111"/><path d="M4.500 7v4.500h4z" fill="#fbe0b6"/><path d="M1 17.500H21" stroke="#111" stroke-width="3"/><path d="M13 12L20 1" stroke="#222" stroke-width="2.500"/></svg></span>
    </div>
    <i class="ring"></i>
  </div>

  <div class="netball">
    <svg width="72" height="72">
      <defs><linearGradient id="gBall" x1="0" y1="0" x2="0" y2="1"><stop offset="0" stop-color="#3a7cc0"/><stop offset=".35" stop-color="#2688dc"/><stop offset=".65" stop-color="#2f9cf0"/></linearGradient>
      <linearGradient id="gArc" x1="0" y1="0" x2="1" y2="0"><stop offset="0" stop-color="#d8e07c"/><stop offset=".6" stop-color="#d8a06c"/><stop offset="1" stop-color="#f05048"/></linearGradient></defs>
      <circle cx="36" cy="36" r="35" fill="url(#gBall)" stroke="#4a6cb4"/>
      <path d="M4 52Q36 44 68 52A35 35 0 0 1 4 52Z" fill="#333a96"/>
      <path d="M9 50A30.500 30.500 0 0 1 60 18" fill="none" stroke="url(#gArc)" stroke-width="3"/><path d="M56 22L62 18 63 28Z" fill="#f05048"/>
      <path d="M16 61V54M13.500 56.500L16 54 18.500 56.500" fill="none" stroke="#f0a060" stroke-width="1.800"/>
      <text x="16" y="42" font-family="Open Sans" font-size="25" font-weight="300" fill="#fff" textLength="30" lengthAdjust="spacingAndGlyphs">76</text>
      <text x="48" y="42" font-family="Liberation Sans" font-size="10" fill="#fff">%</text>
      <text x="27" y="60" font-family="Liberation Sans" font-size="10.500" fill="#e8ecff" textLength="30">0.1K/s</text>
    </svg>
  </div>

</body>
</html>
```
FILE: styles.css
```css
* {
  box-sizing: border-box;
}

body {
  margin: 0;
  width: 1366px;
  height: 768px;
  overflow: hidden;
  position: relative;
  display: flex;
  flex-direction: column;
  font-family: "Noto Sans", "Noto Sans CJK SC", sans-serif;
  font-size: 12px;
  color: #15151f;
  background: #cfcde3;
}

i, em, u {
  font-style: normal;
  text-decoration: none;
}

b {
  font-weight: normal;
}

.sprite {
  display: none;
}

.ico {
  width: 22px;
  height: 22px;
  display: block;
  flex: none;
}

/* title and menu */
.titlebar {
  height: 22px;
  flex: none;
  display: flex;
  align-items: center;
  border-bottom: 1px solid #8d8d9c;
  background:
    radial-gradient(ellipse 28px 9px at 865px 15px, #d3a2c4, transparent),
    radial-gradient(ellipse 30px 12px at 900px 8px, #eedcee, transparent),
    radial-gradient(ellipse 12px 7px at 1197px 13px, #b4eef6, transparent),
    linear-gradient(90deg, transparent 825px, #99999f 830px, #99999f 1095px, transparent 1100px) 0 0 / 100% 2px no-repeat,
    linear-gradient(90deg, #d8d8e4 0, #e3c7d0 105px, #dfeeee 180px, #e6f2f4 350px, #f4eef4 400px, #f2fbf8 470px, #fdfdfd 560px, #fff 900px, #f6fbfa);
}

.app-icon {
  width: 14px;
  height: 14px;
  margin-left: 1px;
}

.title {
  margin-left: 6px;
  letter-spacing: 0.3px;
  white-space: nowrap;
}

.win-buttons {
  margin-left: auto;
  margin-right: 3px;
  align-self: flex-start;
  height: 18px;
  display: flex;
  border: 1px solid #9fa8b2;
  border-top: 0;
  border-radius: 0 0 4px 4px;
}

.win-buttons span {
  width: 27px;
  display: flex;
  align-items: center;
  justify-content: center;
  border-right: 1px solid #b4bcc6;
}

.win-buttons span:last-child {
  width: 47px;
  border: 0;
}

.menubar {
  height: 21px;
  flex: none;
  display: flex;
  align-items: center;
  background: #cfcde3;
}

.menu-icon {
  width: 18px;
  height: 18px;
  margin: 0 3px 0 1px;
}

.menubar a {
  width: 38px;
  height: 19px;
  line-height: 18px;
  text-align: center;
  white-space: nowrap;
}

.menubar a.active {
  width: 36px;
  background: #fde3c0;
}

.menubar a.enovia {
  width: 112px;
  letter-spacing: 0.5px;
}

.mdi-buttons {
  margin-left: auto;
  display: flex;
  gap: 2px;
}

.mdi-buttons span {
  width: 18px;
  height: 18px;
  display: flex;
  align-items: center;
  justify-content: center;
  border: 1px solid #8fa3bd;
  background: #d9e1f2;
}

/* upper toolbars */
.toolbars {
  height: 77px;
  flex: none;
  border-bottom: 1px solid #3b3b58;
  background: linear-gradient(#fff 0, #f6f6fb 3px, #cfcde3 7px, #cfcde3 64px, #a3a2b3 73px, #9a99ab 75px, #d4d4e2);
}

.row {
  display: flex;
  align-items: center;
}

.row-props {
  height: 36px;
  padding-left: 23px;
}

.row-select {
  height: 40px;
  padding-left: 7px;
}

.grip {
  width: 3px;
  height: 17px;
  flex: none;
  align-self: flex-start;
  border-left: 2px solid #fff;
  border-right: 1px solid #a9a9bb;
}

.row-props .grip {
  margin: 3px 8px 0 0;
}

.row-select .grip {
  margin-top: 6px;
}

.row-select .grip.second {
  margin: 6px 6px 0 9px;
}

.combo {
  width: 68px;
  height: 26px;
  margin-right: 3px;
  display: flex;
  flex: none;
  align-items: center;
  justify-content: space-between;
  padding: 0 0 0 4px;
  overflow: hidden;
  white-space: nowrap;
  line-height: 22px;
  background: #fff;
  border: 2px solid;
  border-color: #84848e #e8e8f0 #e8e8f0 #84848e;
  position: relative;
}

.combo b {
  width: 16px;
  height: 22px;
  position: absolute;
  right: 0;
  top: 0;
  background: #d6d5e6;
  border: 1px solid;
  border-color: #fff #77777f #77777f #fff;
}

.combo b::after, .more::after {
  content: "";
  position: absolute;
  border: 4px solid transparent;
  border-top-color: #111;
  border-bottom: 0;
}

.combo b::after {
  left: 3px;
  top: 10px;
}

.combo.narrow {
  width: 43px;
}

.combo.off {
  background: #dddce8;
  color: #8d8d98;
}

.combo.off b::after {
  border-top-color: #9a9aa6;
}

.combo.files {
  width: 80px;
  height: 24px;
  margin: 2px 0 0 4px;
  padding-left: 2px;
}

.combo.files b {
  height: 20px;
}

.row-select .ico {
  margin-top: 1px;
}

.brush {
  margin-left: 1px;
}

.wiz {
  margin-left: 7px;
}

.folder {
  margin-left: 8px;
}

.tool {
  width: 28px;
  display: flex;
  justify-content: center;
  flex: none;
  position: relative;
}

.divider {
  width: 2px;
  height: 34px;
  margin: 0 3px 0 2px;
  border-left: 1px solid #9a9aaa;
  border-right: 1px solid #fff;
}

.more {
  position: relative;
}

.more::after {
  right: -2px;
  bottom: -2px;
}

/* 3D view */
.work {
  height: 546px;
  flex: none;
  display: flex;
}

.view3d {
  width: 1328px;
  position: relative;
  border-left: 2px solid #83839a;
  border-top: 1px solid #2a2844;
  background: linear-gradient(#363167, #3a376b 20%, #403d70 45%, #474474 62%, #4b4779 67%, #635f8d 76%, #8582aa 87%, #aeabca 100%);
}

.tree {
  list-style: none;
  margin: 0;
  padding: 1px 0 0 1px;
  color: #fff;
  font-size: 8.5px;
  line-height: 19px;
}

.tree li {
  height: 18.9px;
  padding-left: 13px;
  display: flex;
  align-items: center;
  position: relative;
  white-space: nowrap;
}

.tree li:not(.root)::before {
  content: "";
  position: absolute;
  left: 4px;
  top: -12px;
  width: 9px;
  height: 20px;
  border-left: 2px solid #f2f2f8;
  border-bottom: 1px solid #f2f2f8;
}

.tree svg {
  width: 16px;
  height: 17px;
  margin-top: -5px;
}

.tree span {
  margin-left: 1px;
  letter-spacing: -0.35px;
  -webkit-text-stroke: 0.2px #fff;
}

.tree .root {
  padding-left: 0;
}

.tree .root span {
  line-height: 10px;
  color: #eaf8ff;
  background: #4f9cc0;
  border-top: 1px solid #fff;
}

.tree em {
  position: absolute;
  left: 1px;
  top: 3px;
  width: 9px;
  height: 9px;
  border-radius: 50%;
  border: 1px solid #8a8a96;
  background: linear-gradient(#111, #111) center / 7px 1px no-repeat, linear-gradient(#111, #111) center / 1px 7px no-repeat, #777;
}

.tree .leaf span {
  margin-left: 0;
  letter-spacing: -0.15px;
}

.tree .leaf {
  padding-left: 12px;
}

.teapot {
  position: absolute;
  left: 358px;
  top: 79px;
  width: 610px;
  height: 350px;
}

.mark text {
  font-family: "Liberation Serif", serif;
  font-size: 57px;
  fill: #e0e0ee;
  stroke: #77759a;
  stroke-width: 0.6px;
}

.mark .mark-cjk {
  font-family: "Noto Sans CJK SC", sans-serif;
  font-weight: 400;
  font-size: 55px;
}

.compass {
  position: absolute;
  left: 1203px;
  top: 9px;
  width: 75px;
  height: 90px;
}

.compass text {
  font-family: "Liberation Sans", sans-serif;
  font-size: 14px;
  fill: #e4dc50;
}

/* docked toolbar on the right */
.dock {
  width: 38px;
  border-top: 1px solid #fff;
  background: linear-gradient(90deg, #fff, #f4f4fa 5px, #d6d5e8 14px, #d0cee4 26px, #b0afc2);
}

.set i {
  display: block;
  width: 17px;
  height: 3px;
  margin-left: 5px;
  border-top: 2px solid #fff;
  border-bottom: 1px solid #a9a9bb;
}

.set span {
  width: 28px;
  height: 28px;
  margin-left: 6px;
  display: flex;
  align-items: center;
  justify-content: center;
}

.s1, .s3, .s4 {
  height: 47px;
  padding-top: 1px;
}

.s1 i, .s3 i, .s4 i {
  margin-bottom: 7px;
}

.s2 {
  height: 73px;
  padding-top: 1px;
}

.s2 i {
  margin-bottom: 7px;
}

.s5 {
  height: 327px;
  padding-top: 1px;
}

.s5 i {
  margin-bottom: 6px;
}

.s6 {
  padding-top: 1px;
}

/* bottom toolbar */
.bottombar {
  height: 38px;
  flex: none;
  display: flex;
  padding-left: 8px;
  border-bottom: 1px solid #4a4a5c;
  background: linear-gradient(#fff, #fff 3px, #d6d5e8 10px, #cfcde3 24px, #a5a4b8);
}

.group {
  display: flex;
  flex: none;
  align-items: center;
  padding-top: 4px;
}

.group .grip {
  margin: 2px 5px 0 0;
}

.g-std { width: 303px; }
.g-know { width: 212px; }
.g-view { width: 379px; }
.g-cat { width: 131px; }
.g-cam { width: 47px; }
.g-3dp { width: 77px; }
.g-upd { width: 49px; }
.g-meas { width: 112px; }

.g-know .tool {
  width: 27.5px;
}

.g-view .tool {
  width: 28.3px;
}

.fx {
  align-items: baseline;
  line-height: 20px;
  color: #111;
}

.fx i {
  font: italic bold 21px/20px "Liberation Serif", serif;
}

.fx small {
  font: 12px/20px "Liberation Sans", sans-serif;
  letter-spacing: -0.7px;
}

.bottombar .more::after {
  bottom: -4px;
  right: -2px;
}

.more.lit::after {
  box-shadow: 0 0 0 1px #fff;
  background: #fff;
}

.ds-logo {
  width: 44px;
  height: 32px;
  margin: 2px 0 0 -2px;
}

/* status line */
.statusbar {
  height: 25px;
  flex: none;
  display: flex;
  background: #cfcde3;
}

.prompt {
  width: 959px;
  padding-left: 3px;
  line-height: 24px;
}

.langbar {
  width: 79px;
  display: flex;
  align-items: center;
  color: #fff;
  background: linear-gradient(90deg, #86868e, #4c4c54 30%, #55555d 60%, #8c8c94);
}

.langbar i {
  width: 9px;
  height: 14px;
  margin-left: 4px;
  background: radial-gradient(circle, #1a1a20 1px, transparent 1px) 0 0 / 3px 4px;
}

.langbar span {
  margin-left: 8px;
  font: bold 10px "Liberation Serif", serif;
}

.langbar b {
  width: 15px;
  height: 15px;
  margin-left: 8px;
  border-radius: 50%;
  border: 1px solid #b8c0f0;
  background: #1c2ca0;
  font-size: 11px;
  font-weight: bold;
  line-height: 13px;
  text-align: center;
}

.langbar u {
  width: 6px;
  height: 13px;
  margin-left: 10px;
  border-top: 2px solid #fff;
  background: linear-gradient(#fff, #fff) 1px 8px / 4px 2px no-repeat;
}

.cmdline {
  width: 259px;
  margin: 2px 0;
  background: #fff;
  border: 1px solid #c0c0d0;
}

.sbtn {
  width: 32px;
  margin: 1px 0 1px 2px;
  display: flex;
  align-items: center;
  justify-content: center;
  border: 1px solid;
  border-color: #f4f4fa #8a8a9a #8a8a9a #f4f4fa;
}

/* taskbar */
.taskbar {
  height: 40px;
  flex: none;
  display: flex;
  color: #fff;
  border-top: 1px solid #3c5a78;
  background:
    linear-gradient(28deg, transparent 46%, rgba(150, 190, 225, .5) 50%, transparent 54%) 880px 0 / 110px 40px no-repeat,
    linear-gradient(90deg, #2a6692, #2d74a2 20%, #1f5f94 42%, #1c5088 70%, #163f70);
}

.start {
  width: 60px;
  padding-left: 7px;
}

.task {
  width: 158px;
  height: 38px;
  margin: 0 3px 0 0;
  display: flex;
  align-items: center;
  border: 1px solid #8cbad2;
  border-radius: 2px;
  background: linear-gradient(165deg, #6fa8c4 0, #4a8db2 35%, #3a82aa 60%, #5aa2c4);
}

.task svg {
  margin-left: 9px;
}

.task .fold {
  margin-left: 10px;
}

.task span {
  margin-left: 3px;
  white-space: nowrap;
}

.task:nth-child(3) {
  width: 159px;
  margin-right: 4px;
}

.task:nth-child(3) span {
  margin-left: 11px;
}

.task.on {
  width: 159px;
  background: linear-gradient(165deg, #c2dce8 0, #7fb4cc 35%, #559cbe 60%, #84c0d8);
}

.task.on span {
  margin-left: 5px;
  letter-spacing: 0.3px;
}

.tray {
  margin-left: 524px;
  padding-bottom: 2px;
  display: flex;
  align-items: center;
  gap: 8px;
}

.mail {
  width: 16px;
  height: 16px;
  background: #e02424;
  font-size: 12px;
  line-height: 15px;
  text-align: center;
}

.clock {
  width: 124px;
  padding-top: 2px;
  margin-left: 3px;
  text-align: center;
  line-height: 18px;
  letter-spacing: 0.1px;
}

.peek {
  flex: 1;
  border: 1px solid #6b90b4;
  background: linear-gradient(135deg, #6d93b6, #1f4c7c 60%);
}

/* floating toolbars */
.palette {
  position: absolute;
  width: 49px;
  padding: 3px 4px 4px;
  border: 1px solid #e8e8f6;
  outline: 1px solid #48476c;
  outline-offset: -2px;
  background: linear-gradient(135deg, #b4b4cc, #8685a6 40%, #9a99b8);
  display: flex;
  flex-direction: column;
}

.palette header {
  height: 21px;
  flex: none;
  padding-left: 2px;
  display: flex;
  justify-content: space-between;
  align-items: flex-start;
  line-height: 18px;
  white-space: nowrap;
}

.palette header b {
  width: 17px;
  height: 18px;
  flex: none;
  margin: 1px 1px 0 0;
  border: 1px solid #3d4570;
  background: linear-gradient(135deg, #b6b8d0, #7e80a4);
  box-shadow: inset 1px 1px 0 #aeb2cc;
  color: #fff;
  font-weight: bold;
  font-size: 9px;
  line-height: 15px;
  text-align: center;
}

.palette .body {
  flex: 1;
  min-height: 0;
  border: 1px solid #16162a;
  border-right-width: 2px;
  border-bottom-width: 2px;
  background: linear-gradient(90deg, #fff, #dad9ea 25%, #cfcde3 70%, #aaa9bd);
}

.palette .body i {
  display: block;
  width: 16px;
  height: 3px;
  margin: 6px 0 5px 5px;
  border-top: 2px solid #fff;
  border-bottom: 1px solid #a4a4b4;
}

.palette .body span {
  width: 28px;
  height: 28px;
  margin: 0 auto;
  display: flex;
  align-items: center;
  justify-content: center;
}

.palette.instant .body span {
  height: 27px;
}

.palette.wide .body {
  display: flex;
  align-items: center;
  background: linear-gradient(#fff, #d8d7e8 40%, #cfcde3 65%, #a8a7ba);
}

.palette.wide .body i {
  width: 3px;
  height: 18px;
  margin: 4px 7px 0 5px;
  align-self: flex-start;
  border: 0;
  border-left: 2px solid #fff;
  border-right: 1px solid #a4a4b4;
}

.palette.wide .body span {
  margin: 0;
}

.constraints { left: 1030px; top: 110px; height: 327px; }
.scenes { left: 1124px; top: 259px; height: 131px; }
.instant { left: 1153px; top: 199px; width: 50px; height: 181px; }
.asmfeat { left: 1278px; top: 271px; width: 50px; height: 161px; }
.move { left: 1214px; top: 386px; width: 50px; height: 161px; }
.asmtools { left: 1268px; top: 464px; height: 140px; }
.create { left: 1087px; top: 463px; width: 59px; height: 70px; }
.catalog { left: 856px; top: 528px; width: 59px; height: 69px; }
.analysis { left: 1063px; top: 567px; width: 114px; height: 69px; }

/* capture dialog */
.dialog {
  position: absolute;
  left: 1118px;
  top: 582px;
  width: 206px;
  height: 80px;
  padding: 0 5px 6px;
  border: 1px solid #2f3348;
  border-radius: 6px;
  box-shadow: inset 0 0 0 1px #e6eaf4;
  background: linear-gradient(100deg, #aebccb, #97a5ba 30%, #a9b6ca 50%, #b4bccf);
}

.dialog header {
  height: 28px;
  display: flex;
  justify-content: space-between;
}

.dialog header span {
  line-height: 26px;
  padding-left: 1px;
}

.ctl {
  height: 18px;
  display: flex;
  border: 1px solid #4e5468;
  border-top: 0;
  border-radius: 0 0 4px 4px;
  overflow: hidden;
  color: #fff;
  font-weight: bold;
  line-height: 16px;
  text-align: center;
}

.ctl b {
  width: 28px;
  font-weight: bold;
  background: linear-gradient(#c2c8d6, #8d96aa);
}

.ctl .close {
  width: 46px;
  font-size: 15px;
  line-height: 14px;
  background: linear-gradient(#e0a096, #c65a4c 45%, #b83824 50%, #d4604c);
}

.panel {
  height: 45px;
  padding: 7px 0 0 8px;
  display: flex;
  border: 1px solid #3b3f50;
  background: radial-gradient(ellipse 36px 9px at 16px 36px, #55584e, transparent), #fbe0b6;
}

.btn {
  width: 28px;
  height: 28px;
  flex: none;
  display: flex;
  align-items: center;
  justify-content: center;
  border: 1px solid;
  border-color: #fff8e8 #8a7c64 #8a7c64 #fff8e8;
}

.btn.in {
  border-color: #8a7c64 #fff8e8 #fff8e8 #8a7c64;
  background: #fdf0dc;
}

.btn.in:first-child {
  border-color: #fff8e8 #8a7c64 #8a7c64 #fff8e8;
  background: none;
}

.btn.gap {
  margin-left: 8px;
}

.ring {
  position: absolute;
  left: 31px;
  top: 56px;
  width: 18px;
  height: 18px;
  border-radius: 50%;
  border: 4px solid #36a3b0;
  border-top-color: #a8e8ec;
  background: #9adfe2;
}

.netball {
  position: absolute;
  left: 898px;
  top: 7px;
  width: 72px;
  height: 72px;
  border-radius: 50%;
  box-shadow: 0 1px 3px rgba(40, 40, 100, .5);
}
```
